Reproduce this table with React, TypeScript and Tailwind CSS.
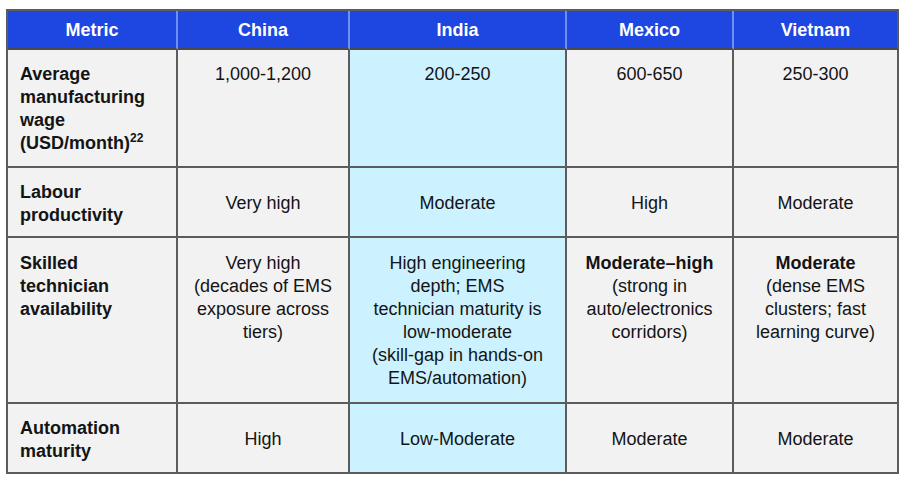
import React from 'react';

const lines = (text: string) =>
  text.split('\n').map((l, i, arr) => (
    <React.Fragment key={i}>
      {l}
      {i < arr.length - 1 && <br />}
    </React.Fragment>
  ));

interface Row {
  metric: React.ReactNode;
  height: string;
  pad: string;
  values: React.ReactNode[];
}

const rows: Row[] = [
  {
    metric: (
      <>
        Average
        <br />
        manufacturing
        <br />
        wage
        <br />
        (USD/month)<sup className="text-[12px] -top-[7px]">22</sup>
      </>
    ),
    height: 'h-[118px]',
    pad: 'justify-start pt-[13px]',
    values: ['1,000-1,200', '200-250', '600-650', '250-300'],
  },
  {
    metric: lines('Labour\nproductivity'),
    height: 'h-[70px]',
    pad: 'justify-center pt-[3px]',
    values: ['Very high', 'Moderate', 'High', 'Moderate'],
  },
  {
    metric: lines('Skilled\ntechnician\navailability'),
    height: 'h-[166px]',
    pad: 'justify-start pt-[14px]',
    values: [
      lines('Very high\n(decades of EMS\nexposure across\ntiers)'),
      lines('High engineering\ndepth; EMS\ntechnician maturity is\nlow-moderate\n(skill-gap in hands-on\nEMS/automation)'),
      <>
        <span className="font-bold">Moderate–high</span>
        <br />
        {lines('(strong in\nauto/electronics\ncorridors)')}
      </>,
      <>
        <span className="font-bold">Moderate</span>
        <br />
        {lines('(dense EMS\nclusters; fast\nlearning curve)')}
      </>,
    ],
  },
  {
    metric: lines('Automation\nmaturity'),
    height: 'h-[70px]',
    pad: 'justify-center pt-[3px]',
    values: ['High', 'Low-Moderate', 'Moderate', 'Moderate'],
  },
];

const headers = ['Metric', 'China', 'India', 'Mexico', 'Vietnam'];

export default function App() {
  return (
    <div className="w-[903px] h-[477px] bg-white pt-[9px] pl-[6px] font-['Liberation_Sans',Arial,sans-serif] text-[18px] leading-[23px] text-[#141414]">
      <div className="grid grid-cols-[170px_172px_217px_167px_165px] w-[893px] border-l-2 border-t-2 border-[#5c5c5c]">
        {/* Header */}
        {headers.map((h, i) => (
          <div
            key={h}
            className={`h-[39px] pt-[2px] bg-[#1e46e0] text-white font-bold flex items-center justify-center border-b-2 border-b-[#4a4a4a] border-r-2 ${
              i === headers.length - 1 ? 'border-r-[#5c5c5c]' : 'border-r-[#6f90f2]'
            }`}
          >
            {h}
          </div>
        ))}

        {/* Body */}
        {rows.map((row, r) => (
          <React.Fragment key={r}>
            <div
              className={`${row.height} ${row.pad} bg-[#f2f2f2] font-bold px-[12px] border-r-2 border-b-2 border-[#5c5c5c] flex flex-col`}
            >
              <div>{row.metric}</div>
            </div>
            {row.values.map((v, c) => (
              <div
                key={c}
                className={`${row.height} ${row.pad} ${
                  c === 1 ? 'bg-[#ccf2ff]' : 'bg-[#f2f2f2]'
                } text-center px-2 border-r-2 border-b-2 border-[#5c5c5c] flex flex-col`}
              >
                <div>{v}</div>
              </div>
            ))}
          </React.Fragment>
        ))}
      </div>
    </div>
  );
}
